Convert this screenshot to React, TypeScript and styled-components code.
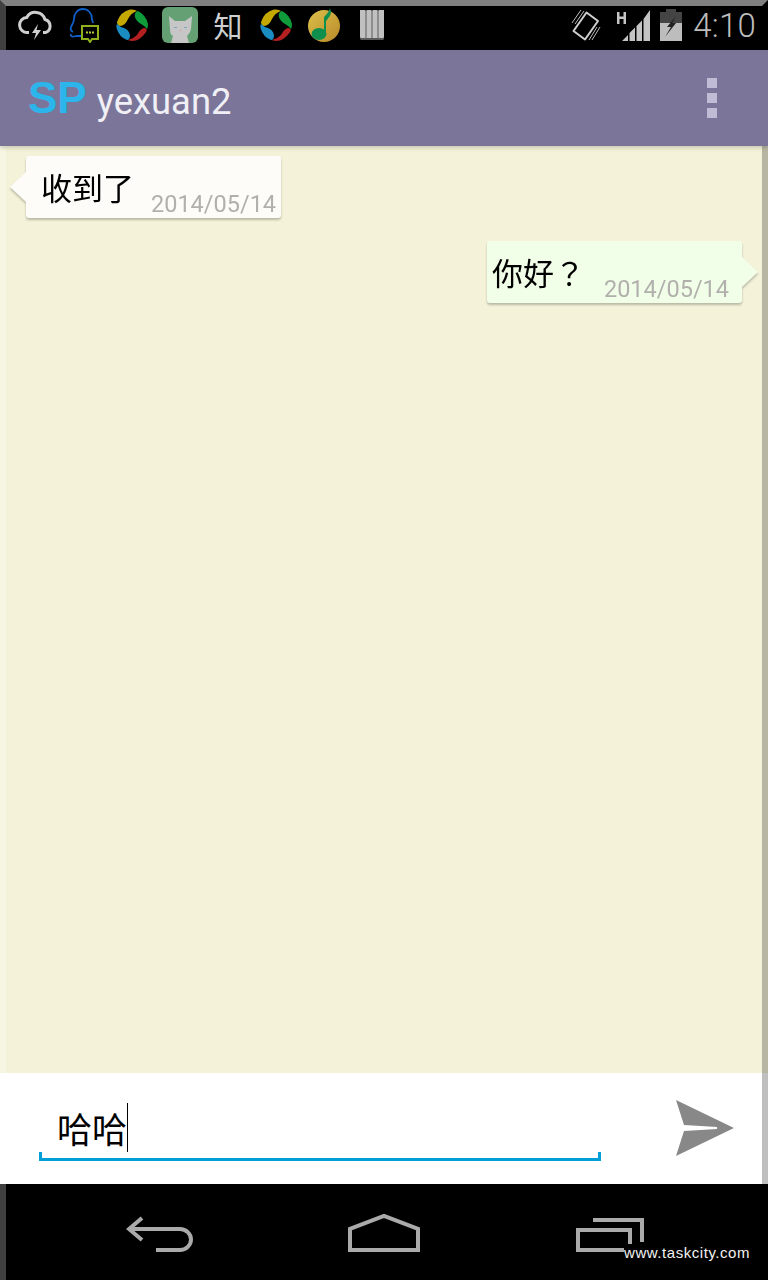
import styled, { createGlobalStyle } from 'styled-components'

const GlobalStyle = createGlobalStyle`
  html, body {
    margin: 0;
    padding: 0;
    background: #000;
  }
`

const Screen = styled.div`
  position: relative;
  width: 768px;
  height: 1280px;
  overflow: hidden;
  display: flex;
  flex-direction: column;
  font-family: Roboto, 'Noto Sans CJK TC', sans-serif;
`

/* bevel of the phone frame, drawn on top of everything */
const Bevel = styled.div`
  position: absolute;
  inset: 0;
  box-sizing: border-box;
  border-top: 6px solid #808080;
  border-left: 6px solid rgba(255, 255, 255, 0.25);
  border-right: 6px solid rgba(0, 0, 0, 0.25);
  pointer-events: none;
`

const StatusBar = styled.div`
  height: 50px;
  padding: 0 0 0 12px;
  background: #000;
  display: flex;
  align-items: center;
`

const NotifySlot = styled.div`
  width: 48px;
  height: 50px;
  display: flex;
  align-items: center;
  justify-content: center;
`

const ZhiGlyph = styled.span`
  font-family: 'Noto Sans CJK SC', sans-serif;
  font-weight: 400;
  font-size: 29px;
  line-height: 50px;
  color: #cfcfcf;
`

const StatusRight = styled.div`
  margin-left: auto;
  padding-right: 12px;
  display: flex;
  align-items: center;
  height: 50px;
`

const StatusIcon = styled.div<{ $left: number }>`
  display: flex;
  margin-left: ${({ $left }) => $left}px;
`

const Clock = styled.span`
  margin-left: 11px;
  font-size: 33px;
  font-weight: 300;
  color: #bdbdbd;
  letter-spacing: 0.2px;
`

const AppBar = styled.header`
  height: 96px;
  padding: 0 51px 0 28px;
  background: #7a7599;
  display: flex;
  align-items: center;
  box-shadow: 0 2px 4px rgba(0, 0, 0, 0.18);
  z-index: 1;
`

const Logo = styled.span`
  font-family: 'Liberation Sans', sans-serif;
  font-weight: 700;
  font-size: 44px;
  color: #2cb5ea;
`

const Title = styled.h1`
  margin: 0 0 0 10px;
  font-size: 36.4px;
  font-weight: 400;
  color: #f0eff5;
  position: relative;
  top: 3px;
`

const Overflow = styled.div`
  margin-left: auto;
  display: flex;
  flex-direction: column;
  gap: 5px;
`

const Dot = styled.i`
  display: block;
  width: 10px;
  height: 10px;
  background: #c0bcd6;
`

const Messages = styled.main`
  flex: 1;
  padding: 10px 26px 0;
  background: #f4f3d9;
  display: flex;
  flex-direction: column;
  gap: 23px;
`

const Bubble = styled.div<{ $mine?: boolean }>`
  position: relative;
  align-self: ${({ $mine }) => ($mine ? 'flex-end' : 'flex-start')};
  height: 62px;
  padding: ${({ $mine }) => ($mine ? '0 13px 0 5px' : '0 5px 0 15px')};
  border-radius: 3px;
  background: ${({ $mine }) => ($mine ? '#f2ffe8' : '#fdfcf8')};
  display: flex;
  filter: drop-shadow(0 2px 1px rgba(0, 0, 0, 0.24));

  &::before {
    content: '';
    position: absolute;
    top: 16px;
    ${({ $mine }) => ($mine ? 'right: -16px;' : 'left: -16px;')}
    width: 16px;
    height: 30px;
    background: inherit;
    clip-path: ${({ $mine }) =>
      $mine ? 'polygon(0 0, 100% 50%, 0 100%)' : 'polygon(100% 0, 0 50%, 100% 100%)'};
  }
`

const BubbleText = styled.span`
  font-family: 'Noto Sans CJK TC', sans-serif;
  font-size: 31px;
  line-height: 62px;
  color: #000;
`

const BubbleDate = styled.span<{ $mine?: boolean }>`
  align-self: flex-end;
  margin-left: ${({ $mine }) => ($mine ? 19 : 17)}px;
  font-size: 23.5px;
  line-height: 28px;
  color: #b1b0ac;
`

const Composer = styled.div`
  height: 111px;
  background: #fff;
  padding: 0 34px 0 39px;
  display: flex;
  justify-content: space-between;
`

const Field = styled.div`
  position: relative;
  box-sizing: border-box;
  width: 562px;
  height: 88px;
  padding: 30px 0 0 18px;
  border-bottom: 3px solid #00a0d6;
  display: flex;
  align-items: flex-start;

  &::before,
  &::after {
    content: '';
    position: absolute;
    bottom: 0;
    width: 3px;
    height: 6px;
    background: #00a0d6;
  }
  &::before {
    left: 0;
  }
  &::after {
    right: 0;
  }
`

const FieldText = styled.span`
  font-family: 'Noto Sans CJK SC', sans-serif;
  font-size: 35px;
  line-height: 50px;
  color: #000;
`

const Caret = styled.i`
  display: block;
  width: 1px;
  height: 49px;
  background: #000;
`

const SendButton = styled.div`
  padding-top: 27px;
`

const NavBar = styled.nav`
  position: relative;
  height: 96px;
  padding: 0 48px;
  background: #000;
  display: grid;
  grid-template-columns: repeat(3, 224px);
  align-items: center;
  justify-items: center;
`

const Watermark = styled.span`
  position: absolute;
  left: 624px;
  top: 60px;
  font-family: 'Liberation Sans', sans-serif;
  font-size: 15px;
  line-height: 18px;
  letter-spacing: 0.55px;
  color: #f2f2f2;
  background: #000;
`

const CloudIcon = () => (
  <svg width="36" height="32" viewBox="0 0 36 32">
    <path
      d="M11 23.500H9.500a7.500 7.500 0 0 1-.8-15A10 10 0 0 1 27 10.500a6.800 6.800 0 0 1 .5 13H25"
      fill="none"
      stroke="#cfcfcf"
      strokeWidth="3"
    />
    <path d="M20 15l-6 9h4l-2 7 7-10h-4.500z" fill="#cfcfcf" />
  </svg>
)

const PenguinIcon = () => (
  <svg width="32" height="36" viewBox="0 0 32 36">
    <path
      d="M5 25c-2-1-3-2-2-5 1-2 3-5 3-8C6 6 10 2 15 2s9 4 9 10c0 1 1 3 1 4M3 27c-1 3 2 3 5 2h6"
      fill="none"
      stroke="#0f5fc8"
      strokeWidth="1.800"
    />
    <path d="M14 19h16v13h-6l-2 3-2-3h-6z" fill="#000" stroke="#8fb01c" strokeWidth="2" />
    <path d="M18 24.500h2v2h-2zM21 24.500h2v2h-2zM24 24.500h2v2h-2z" fill="#b5cf3a" />
  </svg>
)

const SwirlIcon = () => (
  <svg width="32" height="32" viewBox="0 0 32 32">
    <path d="M1 13Q4 3 14 .5Q19 0 21 2Q15 4 12 10Q9 17 4 17Q1 16 1 13z" fill="#c4a800" />
    <path d="M22 2Q30 6 32 15Q32 19 31 20Q29 17 25 15Q20 12 19 8Q18 3 22 2z" fill="#0f9b3a" />
    <path d="M31 21Q28 28 20 31.500Q15 32.500 12 31Q17 30 21 26Q24 20 28 19Q30 19 31 21z" fill="#b3201f" />
    <path d="M11 31Q3 28 .5 19Q0 16 1 15Q4 18 8 19Q13 21 14 26Q14 31 11 31z" fill="#1a8cc0" />
  </svg>
)

const CatIcon = () => (
  <svg width="36" height="36" viewBox="0 0 36 36">
    <rect width="36" height="36" rx="6" fill="#64a074" />
    <path d="M7 9l6 5h10l7-5-1 13c-1 4-3 6-4 7l2 7H9l2-7c-2-1-3-3-3-7z" fill="#c6c6c6" />
    <path d="M12 20h3v1h-3zM22 20h3v1h-3z" fill="#7ba5bb" />
    <path d="M17.500 23h2l-1 1.500z" fill="#d99" />
  </svg>
)

const MusicIcon = () => (
  <svg width="32" height="34" viewBox="0 0 32 34">
    <defs>
      <linearGradient id="gold" x1="0" y1="0" x2="1" y2="1">
        <stop offset="0" stopColor="#dcc04a" />
        <stop offset="1" stopColor="#b98a2a" />
      </linearGradient>
    </defs>
    <circle cx="16" cy="18" r="16" fill="url(#gold)" />
    <path d="M16 9c2-2 5-5 6-9l1 4c0 3-3 7-5 9v13h-2z" fill="#0f8f4e" />
    <ellipse cx="11" cy="26" rx="7.500" ry="6" fill="#0f8f4e" />
  </svg>
)

const BarsIcon = () => (
  <svg width="24" height="30" viewBox="0 0 24 30">
    <path d="M0 1h24v28l-1 1H1l-1-1z" fill="#5a5a5a" />
    <path d="M0 0h5.500v28H1l-1-1zM6.500 0h5v28h-5zM12.500 0h5v28h-5zM18.500 0H24v27l-1 1h-4.500z" fill="#c0c0c0" />
  </svg>
)

const VibrateIcon = () => (
  <svg width="30" height="34" viewBox="0 0 30 34">
    <path d="M2.500 23L15.500 4.500 27 13 14 31.500z" fill="none" stroke="#cfcfcf" strokeWidth="2" strokeLinejoin="round" />
    <path d="M1 15L10 2M4 16L13 3M29 19l-8 13M26 19l-8 13" stroke="#bdbdbd" strokeWidth="1" />
  </svg>
)

const SignalIcon = () => (
  <svg width="34" height="34" viewBox="0 0 34 34">
    <path d="M0 4h2.500v4.500h4V4H9v12H6.500v-5h-4v5H0z" fill="#c4c4c4" />
    <path d="M5 33l6-6v6zM12.500 33v-8l5.500-5.500V33zM19.500 33V18l5.500-5.500V33zM26.500 33V11L33 2v31z" fill="#c4c4c4" />
  </svg>
)

const BatteryIcon = () => (
  <svg width="22" height="32" viewBox="0 0 22 32">
    <path d="M6 0h10v3h6v12H0V3h6z" fill="#444" />
    <path d="M0 14h22v18H0z" fill="#bdbdbd" />
    <path d="M16 7L7 18h4l-6 10 11-14h-4l4-7z" fill="#222" />
  </svg>
)

const SendIcon = () => (
  <svg width="58" height="56" viewBox="0 0 58 56">
    <path d="M0 0l58 28-58 28 8-25 33-2v-2L8 25z" fill="#888" />
  </svg>
)

const BackIcon = () => (
  <svg width="68" height="40" viewBox="0 -4 68 40">
    <path
      d="M16 2L3 13l13 11M3 13h51c6 0 11 5 11 10.500S60 34 54 34H30"
      fill="none"
      stroke="#aaa"
      strokeWidth="4"
    />
  </svg>
)

const HomeIcon = () => (
  <svg width="72" height="40" viewBox="0 -2 72 40">
    <path d="M2 36V15L36 2l34 13v21z" fill="none" stroke="#aaa" strokeWidth="4" />
  </svg>
)

const RecentsIcon = () => (
  <svg width="72" height="40" viewBox="-4 -6 72 40">
    <path d="M2 12h52v20H2zM17 2h49v22" fill="none" stroke="#aaa" strokeWidth="4" />
  </svg>
)

export default function App() {
  return (
    <Screen>
      <GlobalStyle />
      <StatusBar>
        <NotifySlot><CloudIcon /></NotifySlot>
        <NotifySlot><PenguinIcon /></NotifySlot>
        <NotifySlot><SwirlIcon /></NotifySlot>
        <NotifySlot><CatIcon /></NotifySlot>
        <NotifySlot><ZhiGlyph>知</ZhiGlyph></NotifySlot>
        <NotifySlot><SwirlIcon /></NotifySlot>
        <NotifySlot><MusicIcon /></NotifySlot>
        <NotifySlot><BarsIcon /></NotifySlot>
        <StatusRight>
          <StatusIcon $left={0}><VibrateIcon /></StatusIcon>
          <StatusIcon $left={16}><SignalIcon /></StatusIcon>
          <StatusIcon $left={9}><BatteryIcon /></StatusIcon>
          <Clock>4:10</Clock>
        </StatusRight>
      </StatusBar>
      <AppBar>
        <Logo>SP</Logo>
        <Title>yexuan2</Title>
        <Overflow>
          <Dot />
          <Dot />
          <Dot />
        </Overflow>
      </AppBar>
      <Messages>
        <Bubble>
          <BubbleText>收到了</BubbleText>
          <BubbleDate>2014/05/14</BubbleDate>
        </Bubble>
        <Bubble $mine>
          <BubbleText>你好？</BubbleText>
          <BubbleDate $mine>2014/05/14</BubbleDate>
        </Bubble>
      </Messages>
      <Composer>
        <Field>
          <FieldText>哈哈</FieldText>
          <Caret />
        </Field>
        <SendButton>
          <SendIcon />
        </SendButton>
      </Composer>
      <NavBar>
        <BackIcon />
        <HomeIcon />
        <RecentsIcon />
        <Watermark>www.taskcity.com</Watermark>
      </NavBar>
      <Bevel />
    </Screen>
  )
}
